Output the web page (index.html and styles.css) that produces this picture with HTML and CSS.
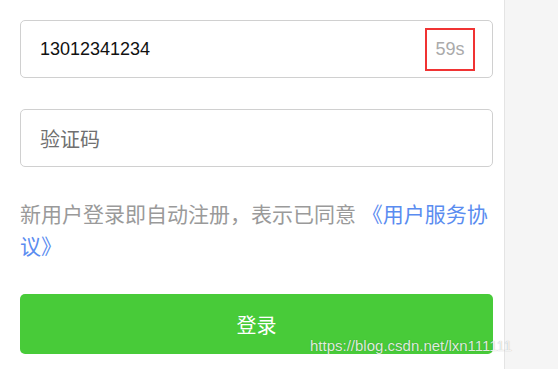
FILE: index.html
```html
<!DOCTYPE html>
<html lang="zh">
<head>
    <meta charset="UTF-8">
    <meta name="viewport" content="width=device-width, initial-scale=1.0">
    <title>登录</title>
    <link rel="stylesheet" href="styles.css">
</head>
<body>
    <div class="page">
        <div class="field">
            <span class="phone">13012341234</span>
            <span class="count">59s</span>
        </div>
        <div class="field">
            <span class="placeholder">验证码</span>
        </div>
        <p class="agree">新用户登录即自动注册，表示已同意 <a class="link">《用户服务协议》</a></p>
        <div class="login-btn">登录</div>
    </div>
    <div class="side"></div>
    <div class="watermark">https://blog.csdn.net/lxn111111</div>
</body>
</html>
```

FILE: styles.css
```css
body {
    margin: 0;
    display: flex;
    height: 369px;
    overflow: hidden;
    font-family: "Liberation Sans", "Noto Sans CJK SC", sans-serif;
    background: #fff;
}
.page {
    width: 473px;
    padding: 20px 11px 0 20px;
    border-right: 1px solid #e4e4e4;
    flex-shrink: 0;
}
.side {
    flex: 1;
    background: #f5f5f5;
}
.field {
    height: 56px;
    border: 1px solid #d0d0d0;
    border-radius: 5px;
    display: flex;
    align-items: center;
    justify-content: space-between;
    padding: 0 17px 0 19px;
    margin-bottom: 31px;
}
.phone {
    color: #111;
    font-size: 18px;
}
.count {
    width: 46px;
    height: 39px;
    line-height: 39px;
    text-align: center;
    color: #aaa;
    font-size: 18px;
    border: 2px solid #f03333;
}
.placeholder {
    color: #707070;
    font-size: 20px;
}
.agree {
    margin: 32px 0 31px;
    font-size: 21px;
    line-height: 32px;
    color: #9a9a9a;
}
.link {
    color: #5a8cf0;
}
.login-btn {
    height: 60px;
    background: #48cb39;
    border-radius: 5px;
    color: #fff;
    font-size: 20px;
    display: flex;
    align-items: center;
    justify-content: center;
}
.watermark {
    position: absolute;
    left: 310px;
    top: 337px;
    font-size: 15px;
    color: rgba(255, 255, 255, 0.85);
    text-shadow: 0 0 1px rgba(0, 0, 0, 0.35);
}
```
